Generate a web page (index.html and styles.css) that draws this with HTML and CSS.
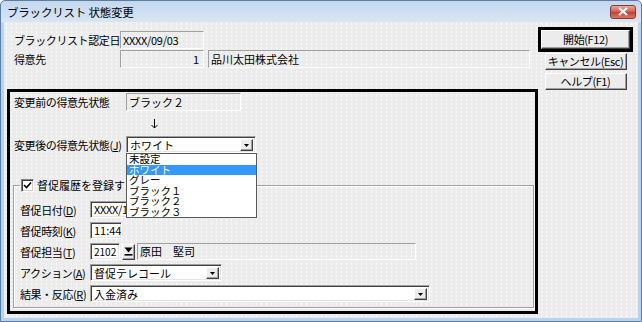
FILE: index.html
```html
<!DOCTYPE html>
<html lang="ja">
<head>
  <meta charset="UTF-8">
  <title>ブラックリスト 状態変更</title>
  <link rel="stylesheet" href="styles.css">
</head>
<body>
<div class="window">
  <div class="titlebar">
    <span class="title">ブラックリスト 状態変更</span>
    <span class="close-btn">
      <svg width="12" height="9" viewBox="0 0 12 9"><path d="M2 1 L10 8 M10 1 L2 8" stroke="#fff" stroke-width="2.2"/></svg>
    </span>
  </div>

  <div class="client">
    <div class="main">
      <div class="row row-first">
        <span class="label label-top">ブラックリスト認定日</span>
        <span class="field readonly w-date">XXXX/09/03</span>
      </div>
      <div class="row row-second">
        <span class="label label-top">得意先</span>
        <span class="field readonly w-code num">1</span>
        <span class="field readonly w-customer">品川太田株式会社</span>
      </div>

      <div class="status-box">
        <div class="row row-before">
          <span class="label label-status">変更前の得意先状態</span>
          <span class="field readonly w-status">ブラック２</span>
        </div>
        <div class="arrow-down">
          <svg width="7" height="10" viewBox="0 0 7 10"><path d="M3.5 0 V9 M0.5 6 L3.5 9 L6.5 6" stroke="#000" stroke-width="1" fill="none"/></svg>
        </div>
        <div class="row row-after">
          <span class="label label-status">変更後の得意先状態(<u>J</u>)</span>
          <div class="combo w-status-combo">
            <span class="combo-text">ホワイト</span>
            <span class="combo-btn"><svg width="5" height="3" viewBox="0 0 5 3"><path d="M0 0 H5 L2.5 3 Z" fill="#000"/></svg></span>
          </div>
          <ul class="dropdown-list">
            <li>未設定</li>
            <li class="selected">ホワイト</li>
            <li>グレー</li>
            <li>ブラック１</li>
            <li>ブラック２</li>
            <li>ブラック３</li>
          </ul>
        </div>

        <fieldset class="dun-group">
          <legend>
            <span class="checkbox"><svg width="9" height="9" viewBox="0 0 9 9"><path d="M1 4 L3.5 6.5 L8 1.5" stroke="#000" stroke-width="1.6" fill="none"/></svg></span>
            督促履歴を登録する
          </legend>
          <div class="group-row">
            <span class="label label-group">督促日付(<u>D</u>)</span>
            <span class="field edit w-dun-date">XXXX/10/03</span>
          </div>
          <div class="group-row">
            <span class="label label-group">督促時刻(<u>K</u>)</span>
            <span class="field edit w-time">11:44</span>
          </div>
          <div class="group-row">
            <span class="label label-group">督促担当(<u>T</u>)</span>
            <span class="field edit w-staff">2102</span>
            <span class="staff-btn"><svg width="9" height="9" viewBox="0 0 9 9"><path d="M0.5 0.5 H8.5 L4.5 5.5 Z" fill="#000"/><rect x="0.5" y="7" width="8" height="1.6" fill="#000"/></svg></span>
            <span class="field readonly w-staff-name">原田　堅司</span>
          </div>
          <div class="group-row">
            <span class="label label-group">アクション(<u>A</u>)</span>
            <div class="combo w-action">
              <span class="combo-text">督促テレコール</span>
              <span class="combo-btn"><svg width="5" height="3" viewBox="0 0 5 3"><path d="M0 0 H5 L2.5 3 Z" fill="#000"/></svg></span>
            </div>
          </div>
          <div class="group-row">
            <span class="label label-group">結果・反応(<u>R</u>)</span>
            <div class="combo w-result">
              <span class="combo-text">入金済み</span>
              <span class="combo-btn"><svg width="5" height="3" viewBox="0 0 5 3"><path d="M0 0 H5 L2.5 3 Z" fill="#000"/></svg></span>
            </div>
          </div>
        </fieldset>
      </div>
    </div>

    <div class="buttons">
      <div class="default-frame"><button class="btn btn-start">開始(F12)</button></div>
      <button class="btn">キャンセル(Esc)</button>
      <button class="btn btn-help">ヘルプ(F1)</button>
    </div>
  </div>
</div>
</body>
</html>
```

FILE: styles.css
```css
* {
  box-sizing: border-box;
}

body {
  margin: 0;
  font-family: "Noto Sans CJK JP", "Noto Sans", sans-serif;
  font-size: 11px;
  color: #000;
}

.window {
  width: 642px;
  height: 322px;
  display: flex;
  flex-direction: column;
  padding: 0 3px 3px;
  border: 1px solid #5d7d9e;
  border-radius: 5px 5px 0 0;
  background: linear-gradient(#c4d8ee, #d8e5f4 21px, #bad3ec 22px);
}

.titlebar {
  height: 21px;
  display: flex;
  align-items: center;
  justify-content: space-between;
  padding: 0 2px 0 3px;
}

.title {
  font-size: 11.5px;
  line-height: 14px;
  letter-spacing: -0.2px;
}

.close-btn {
  width: 26px;
  height: 14px;
  display: flex;
  align-items: center;
  justify-content: center;
  border: 1px solid #8a3a34;
  border-radius: 3px;
  background: linear-gradient(#e8a89c, #cf5a4c 50%, #c2402f 51%, #d77a66);
}

.client {
  flex: 1;
  display: flex;
  padding-left: 3px;
  background-color: #ececec;
  background-image: radial-gradient(circle, rgba(255,255,255,0.7) 0.5px, transparent 0.8px);
  background-size: 5px 4px;
}

.main {
  width: 531px;
}

.row {
  display: flex;
  align-items: center;
  padding-left: 7px;
}

.label {
  display: block;
  line-height: 14px;
  letter-spacing: -0.4px;
  white-space: nowrap;
}

.label-top {
  width: 106px;
}

.label-status {
  width: 112px;
}

.label-group {
  width: 70px;
}

.field {
  display: block;
  height: 18px;
  line-height: 16px;
  padding: 0 2px;
  white-space: nowrap;
  overflow: hidden;
}

.readonly {
  border: 1px solid;
  border-color: #a0a0a0 #fff #fff #a0a0a0;
}

.edit {
  height: 17px;
  line-height: 15px;
  padding: 0 2px 0 3px;
  background: #fff;
  border: 1px solid;
  border-color: #a0a0a0 #fff #fff #a0a0a0;
  box-shadow: inset 1px 1px #404040, inset -1px -1px #e3e3e3;
}

.num {
  text-align: right;
  padding-right: 4px;
}

.row-first {
  margin-top: 9px;
}

.row-second {
  margin-top: 1px;
}

.w-date { width: 84px; letter-spacing: -0.3px; }
.w-code { width: 84px; }
.w-customer { width: 322px; margin-left: 4px; }

.status-box {
  margin-top: 21px;
  height: 225px;
  border: 3px solid #000;
}

.status-box .row {
  padding-left: 4px;
}

.row-before {
  margin-top: 1px;
}

.w-status { width: 115px; }

.arrow-down {
  height: 25px;
  display: flex;
  align-items: center;
  padding-left: 141px;
}

.row-after {
  position: relative;
}

.combo {
  height: 17px;
  display: flex;
  background: #fff;
  border: 1px solid;
  border-color: #a0a0a0 #fff #fff #a0a0a0;
  box-shadow: inset 1px 1px #404040, inset -1px -1px #e3e3e3;
  padding: 2px 2px 1px 2px;
}

.combo-text {
  flex: 1;
  line-height: 13px;
  padding-left: 1px;
  white-space: nowrap;
}

.combo-btn {
  width: 13px;
  height: 12px;
  display: flex;
  align-items: center;
  justify-content: center;
  background: #ececec;
  border: 1px solid;
  border-color: #fff #404040 #404040 #fff;
  box-shadow: inset -1px -1px #a0a0a0;
}

.w-status-combo { width: 130px; }

.dropdown-list {
  position: absolute;
  left: 116px;
  top: 17px;
  z-index: 2;
  width: 131px;
  margin: 0;
  padding: 0;
  list-style: none;
  background: #fff;
  border: 1px solid #5a5a5a;
}

.dropdown-list li {
  height: 10.5px;
  line-height: 10.5px;
  padding-left: 2px;
  font-size: 10.5px;
  white-space: nowrap;
}

.dropdown-list .selected {
  background: #3399ff;
  color: #fff;
}

.dun-group {
  margin: 26px 1px 0 3px;
  padding: 5px 6px 5px 6px;
  border: 1px solid #a0a0a0;
  box-shadow: 1px 1px 0 #fff, inset 1px 1px 0 #fff;
}

.dun-group legend {
  display: flex;
  align-items: center;
  height: 13px;
  padding: 0 1px;
  line-height: 13px;
  white-space: nowrap;
}

.checkbox {
  width: 13px;
  height: 13px;
  margin-right: 3px;
  display: flex;
  align-items: center;
  justify-content: center;
  background: #fff;
  border: 1px solid;
  border-color: #808080 #fff #fff #808080;
  box-shadow: inset 1px 1px #404040, inset -1px -1px #d4d0c8;
}

.group-row {
  display: flex;
  align-items: center;
  height: 17px;
  margin-top: 4px;
}

.w-dun-date { width: 72px; letter-spacing: -0.3px; }
.w-time { width: 32px; }
.w-staff { width: 30px; font-size: 10px; }
.w-staff-name { width: 279px; height: 17px; line-height: 15px; margin-left: 2px; }
.w-action { width: 132px; }
.w-result { width: 340px; }

.staff-btn {
  width: 13px;
  height: 16px;
  margin-left: 2px;
  display: flex;
  align-items: center;
  justify-content: center;
  background: #ececec;
  border: 1px solid;
  border-color: #fff #404040 #404040 #fff;
  box-shadow: inset -1px -1px #a0a0a0;
}

.buttons {
  width: 95px;
  display: flex;
  flex-direction: column;
  align-items: center;
  padding-top: 5px;
}

.btn {
  width: 82px;
  height: 17px;
  padding: 0;
  font: inherit;
  line-height: 15px;
  letter-spacing: -0.4px;
  color: #000;
  background: #ececec;
  border: 1px solid;
  border-color: #fff #404040 #404040 #fff;
  box-shadow: inset -1px -1px #a0a0a0;
  white-space: nowrap;
}

.default-frame {
  width: 95px;
  height: 25px;
  border: 3px solid #000;
  margin-bottom: 1px;
}

.btn-start {
  width: 100%;
  height: 100%;
}

.btn-help {
  margin-top: 3px;
}
```
